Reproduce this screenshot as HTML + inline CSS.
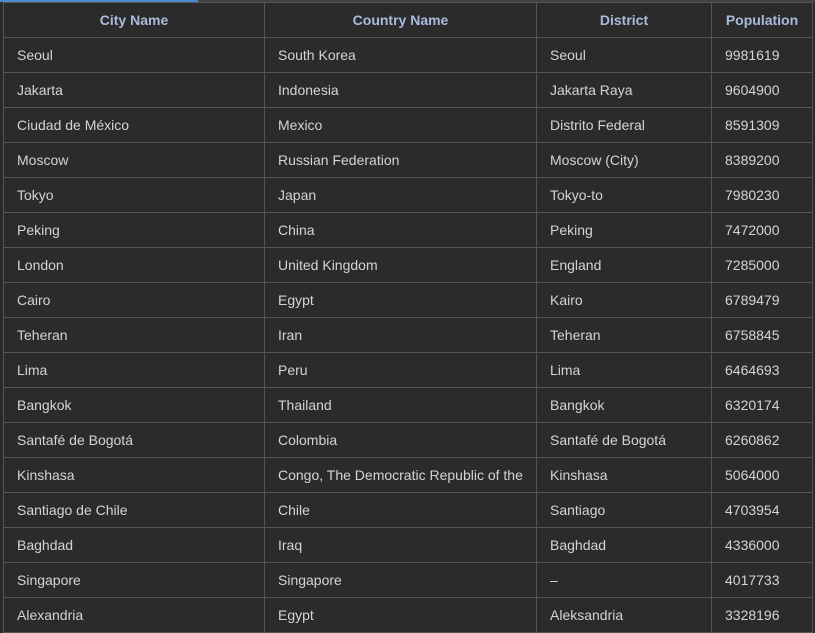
<!DOCTYPE html>
<html><head><style>
html,body{margin:0;padding:0;background:#2b2b2b;width:815px;height:602px;overflow:hidden;font-family:"Liberation Sans",Arial,sans-serif;}
.bar{position:absolute;left:0;top:0;width:198px;height:2px;background:#4a8ad0;}
.bar2{position:absolute;left:198px;top:0;width:617px;height:2px;background:#444;}
table{position:absolute;left:3px;top:2px;border-collapse:collapse;table-layout:fixed;width:809px;}
td,th{border:1px solid #555;height:34px;padding:0 0 0 13px;font-size:14px;color:#d4d4d4;text-align:left;white-space:nowrap;overflow:hidden;}
th{text-align:center;font-weight:bold;color:#a9bbdd;padding:0;}
</style></head><body>
<div class="bar"></div><div class="bar2"></div>
<table>
<colgroup><col style="width:261px"><col style="width:272px"><col style="width:175px"><col style="width:101px"></colgroup>
<tr><th>City Name</th><th>Country Name</th><th>District</th><th>Population</th></tr>
<tr><td>Seoul</td><td>South Korea</td><td>Seoul</td><td>9981619</td></tr>
<tr><td>Jakarta</td><td>Indonesia</td><td>Jakarta Raya</td><td>9604900</td></tr>
<tr><td>Ciudad de México</td><td>Mexico</td><td>Distrito Federal</td><td>8591309</td></tr>
<tr><td>Moscow</td><td>Russian Federation</td><td>Moscow (City)</td><td>8389200</td></tr>
<tr><td>Tokyo</td><td>Japan</td><td>Tokyo-to</td><td>7980230</td></tr>
<tr><td>Peking</td><td>China</td><td>Peking</td><td>7472000</td></tr>
<tr><td>London</td><td>United Kingdom</td><td>England</td><td>7285000</td></tr>
<tr><td>Cairo</td><td>Egypt</td><td>Kairo</td><td>6789479</td></tr>
<tr><td>Teheran</td><td>Iran</td><td>Teheran</td><td>6758845</td></tr>
<tr><td>Lima</td><td>Peru</td><td>Lima</td><td>6464693</td></tr>
<tr><td>Bangkok</td><td>Thailand</td><td>Bangkok</td><td>6320174</td></tr>
<tr><td>Santafé de Bogotá</td><td>Colombia</td><td>Santafé de Bogotá</td><td>6260862</td></tr>
<tr><td>Kinshasa</td><td>Congo, The Democratic Republic of the</td><td>Kinshasa</td><td>5064000</td></tr>
<tr><td>Santiago de Chile</td><td>Chile</td><td>Santiago</td><td>4703954</td></tr>
<tr><td>Baghdad</td><td>Iraq</td><td>Baghdad</td><td>4336000</td></tr>
<tr><td>Singapore</td><td>Singapore</td><td>–</td><td>4017733</td></tr>
<tr><td>Alexandria</td><td>Egypt</td><td>Aleksandria</td><td>3328196</td></tr>
</table>
</body></html>
